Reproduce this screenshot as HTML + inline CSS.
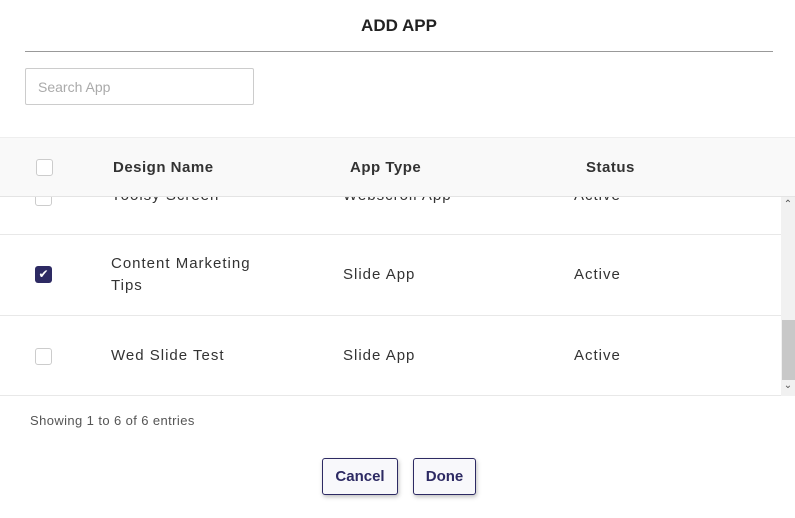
<!DOCTYPE html>
<html><head><style>
body{margin:0;width:795px;height:518px;background:#fff;font-family:"Liberation Sans",sans-serif;color:#333;position:relative;overflow:hidden}
.a{position:absolute}
.t{font-size:15px;letter-spacing:1px;color:#333}
.h{font-size:15px;font-weight:bold;letter-spacing:.5px;color:#333}
.cb{width:15px;height:15px;border:1px solid #ccc;border-radius:3px;background:#fff}
.btn{border:1.5px solid #2d2a63;border-radius:3px;background:#f8f8fb;color:#2d2a63;font-weight:bold;font-size:15px;text-align:center;box-shadow:1px 2px 4px rgba(0,0,0,.25);box-sizing:border-box}
</style></head><body>
<div class="a" style="top:16px;left:0;width:798px;text-align:center;font-size:17px;font-weight:bold;color:#222">ADD APP</div>
<div class="a" style="top:51px;left:25px;width:748px;height:1px;background:#999"></div>
<div class="a" style="top:68px;left:25px;width:229px;height:37px;border:1px solid #ccc;border-radius:2px;box-sizing:border-box;padding:10px 12px;font-size:14px;color:#aaa">Search App</div>
<div class="a" style="top:197px;left:0;width:781px;height:199px;overflow:hidden">
 <div class="a t" style="top:-10px;left:111px">Yoolsy Screen</div>
 <div class="a t" style="top:-10px;left:343px">Webscroll App</div>
 <div class="a t" style="top:-10px;left:574px">Active</div>
 <div class="a cb" style="top:-8px;left:35px"></div>
 <div class="a" style="top:37px;left:0;width:781px;height:1px;background:#e8e8e8"></div>
 <div class="a t" style="top:56px;left:111px;line-height:22px">Content Marketing<br>Tips</div>
 <div class="a t" style="top:69px;left:343px">Slide App</div>
 <div class="a t" style="top:69px;left:574px">Active</div>
 <div class="a" style="top:69px;left:35px;width:17px;height:17px;background:#2d2a63;border-radius:3px;color:#fff;font-size:12px;text-align:center;line-height:17px">✔</div>
 <div class="a" style="top:118px;left:0;width:781px;height:1px;background:#e8e8e8"></div>
 <div class="a t" style="top:150px;left:111px">Wed Slide Test</div>
 <div class="a t" style="top:150px;left:343px">Slide App</div>
 <div class="a t" style="top:150px;left:574px">Active</div>
 <div class="a cb" style="top:151px;left:35px"></div>
 <div class="a" style="top:198px;left:0;width:781px;height:1px;background:#e8e8e8"></div>
</div>
<div class="a" style="top:137px;left:0;width:795px;height:60px;background:#f9f9f9;border-top:1px solid #eee;border-bottom:1px solid #e4e4e4;box-sizing:border-box"></div>
<div class="a cb" style="top:159px;left:36px"></div>
<div class="a h" style="top:159px;left:113px">Design Name</div>
<div class="a h" style="top:159px;left:350px">App Type</div>
<div class="a h" style="top:159px;left:586px">Status</div>
<div class="a" style="top:197px;left:781px;width:14px;height:199px;background:#f1f1f1"></div>
<div class="a" style="top:320px;left:782px;width:13px;height:60px;background:#c8c8c8"></div>
<div class="a" style="top:199px;left:781px;width:14px;text-align:center;font-size:10px;color:#555">&#8963;</div>
<div class="a" style="top:380px;left:781px;width:14px;text-align:center;font-size:10px;color:#555">&#8964;</div>
<div class="a" style="top:413px;left:30px;font-size:13px;color:#555;letter-spacing:.4px">Showing 1 to 6 of 6 entries</div>
<div class="a btn" style="top:458px;left:322px;width:76px;height:37px;line-height:36px">Cancel</div>
<div class="a btn" style="top:458px;left:413px;width:63px;height:37px;line-height:36px">Done</div>
</body></html>
